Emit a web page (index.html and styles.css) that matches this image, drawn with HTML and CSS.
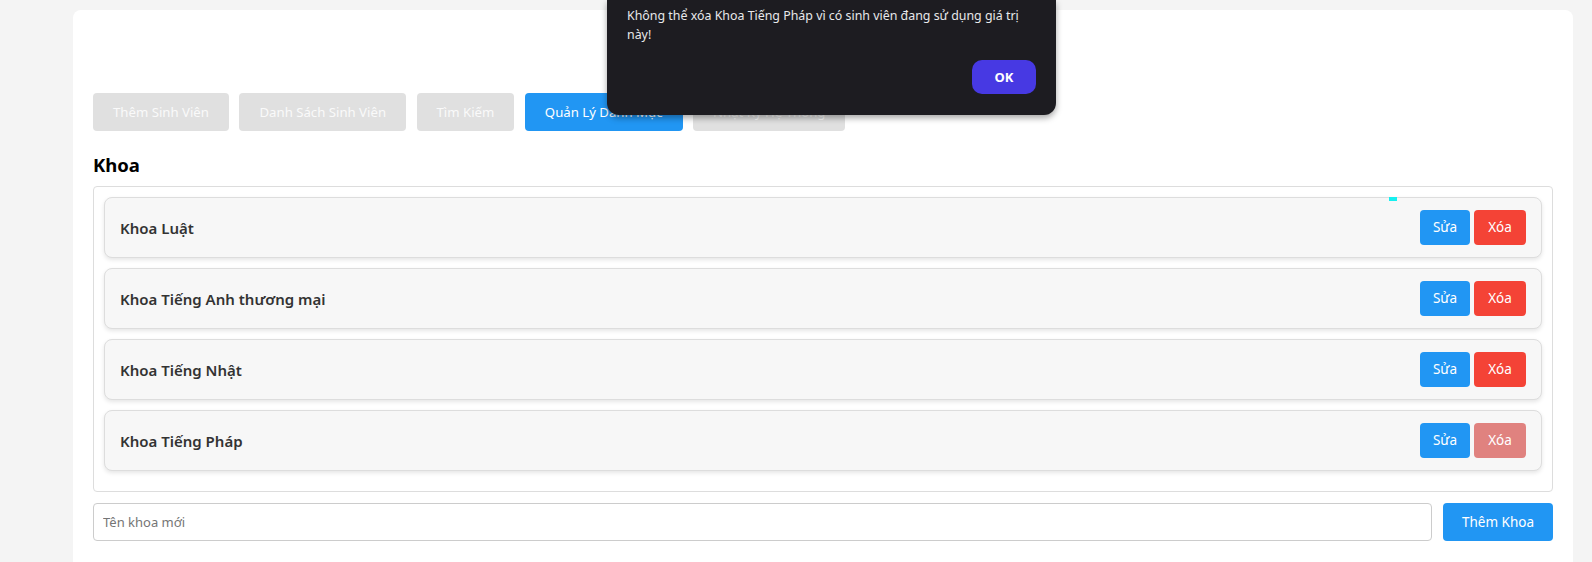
FILE: index.html
```html
<!DOCTYPE html>
<html lang="vi">
<head>
<meta charset="utf-8">
<title>Quản Lý Danh Mục</title>
<link rel="stylesheet" href="styles.css">
</head>
<body>
<div class="page">
  <main class="card">
    <div class="card-head"></div>
    <nav class="tabs">
      <button class="tab">Thêm Sinh Viên</button>
      <button class="tab">Danh Sách Sinh Viên</button>
      <button class="tab">Tìm Kiếm</button>
      <button class="tab tab-active">Quản Lý Danh Mục</button>
      <button class="tab">Nhật Ký Hệ Thống</button>
    </nav>
    <h3 class="section-title">Khoa</h3>
    <div class="list">
      <span class="focus-mark"></span>
      <div class="item">
        <span class="item-name">Khoa Luật</span>
        <div class="item-actions"><button class="btn btn-edit">Sửa</button><button class="btn btn-del">Xóa</button></div>
      </div>
      <div class="item">
        <span class="item-name">Khoa Tiếng Anh thương mại</span>
        <div class="item-actions"><button class="btn btn-edit">Sửa</button><button class="btn btn-del">Xóa</button></div>
      </div>
      <div class="item">
        <span class="item-name">Khoa Tiếng Nhật</span>
        <div class="item-actions"><button class="btn btn-edit">Sửa</button><button class="btn btn-del">Xóa</button></div>
      </div>
      <div class="item">
        <span class="item-name">Khoa Tiếng Pháp</span>
        <div class="item-actions"><button class="btn btn-edit">Sửa</button><button class="btn btn-del btn-del-dim">Xóa</button></div>
      </div>
    </div>
    <div class="add-row">
      <input class="add-input" type="text" placeholder="Tên khoa mới">
      <button class="add-btn">Thêm Khoa</button>
    </div>
  </main>
</div>
<div class="alert">
  <p class="alert-text">Không thể xóa Khoa Tiếng Pháp vì có sinh viên đang sử dụng giá trị<br>này!</p>
  <div class="alert-actions"><button class="alert-ok">OK</button></div>
</div>
</body>
</html>
```
FILE: styles.css
```css
* { box-sizing: border-box; }
html, body { margin: 0; padding: 0; }
body {
  background: #f4f4f4;
  font-family: "Noto Sans", "Open Sans", sans-serif;
  color: #333;
  overflow: hidden;
}
.page {
  padding: 10px 0 0 73px;
}
.card {
  width: 1500px;
  min-height: 600px;
  background: #fff;
  border-radius: 8px;
  padding: 20px;
}
.card-head { height: 63px; }
.tabs {
  display: flex;
  gap: 10.5px;
}
.tab {
  font-family: inherit;
  font-size: 13.2px;
  line-height: 18px;
  padding: 10px 20px;
  border: none;
  border-radius: 4px;
  background: #e0e0e0;
  color: #fafafa;
}
.tab-active { background: #2196f3; color: #fff; }
.section-title {
  margin: 21px 0 9px;
  font-size: 18.5px;
  line-height: 25px;
  font-weight: 700;
  color: #000;
}
.list {
  position: relative;
  border: 1px solid #ddd;
  border-radius: 4px;
  padding: 10px;
}
.focus-mark {
  position: absolute;
  left: 1295px;
  top: 10px;
  width: 8px;
  height: 4px;
  background: #16f0f0;
}
.item {
  display: flex;
  align-items: center;
  justify-content: space-between;
  height: 61px;
  margin-bottom: 10px;
  padding: 0 15px;
  background: #f7f7f7;
  border: 1px solid #ddd;
  border-radius: 8px;
  box-shadow: 0 2px 4px rgba(0,0,0,0.1);
}
.item-name {
  font-size: 15px;
  font-weight: 600;
  color: #333;
}
.item-actions { display: flex; gap: 4px; }
.btn {
  font-family: inherit;
  font-size: 13.5px;
  line-height: 19px;
  height: 35px;
  border: none;
  border-radius: 4px;
  color: #fff;
}
.btn-edit { background: #2196f3; width: 50px; padding: 8px 0; }
.btn-del { background: #f44336; width: 52px; padding: 8px 0; }
.btn-del-dim { background: #e0827f; }
.add-row {
  display: flex;
  gap: 11px;
  margin-top: 11px;
}
.add-input {
  flex: 1;
  height: 38px;
  border: 1px solid #ccc;
  border-radius: 4px;
  padding: 0 9px;
  font-family: inherit;
  font-size: 13px;
  color: #333;
}
.add-input::placeholder { color: #757575; }
.add-btn {
  width: 110px;
  height: 38px;
  border: none;
  border-radius: 4px;
  background: #2196f3;
  color: #fff;
  font-family: inherit;
  font-size: 13.5px;
}
.alert {
  position: absolute;
  left: 607px;
  top: 0;
  width: 449px;
  background: #1d1c21;
  border-radius: 0 0 12px 12px;
  box-shadow: 0 3px 6px rgba(0,0,0,0.35);
  padding: 6px 20px 21px;
  color: #e8e8ea;
}
.alert-text {
  margin: 0;
  font-size: 12.4px;
  line-height: 19px;
  white-space: nowrap;
}
.alert-actions {
  display: flex;
  justify-content: flex-end;
  margin-top: 16px;
}
.alert-ok {
  width: 64px;
  height: 34px;
  border: none;
  border-radius: 10px;
  background: #4739e3;
  color: #fff;
  font-family: inherit;
  font-size: 13px;
  font-weight: 700;
}
```
